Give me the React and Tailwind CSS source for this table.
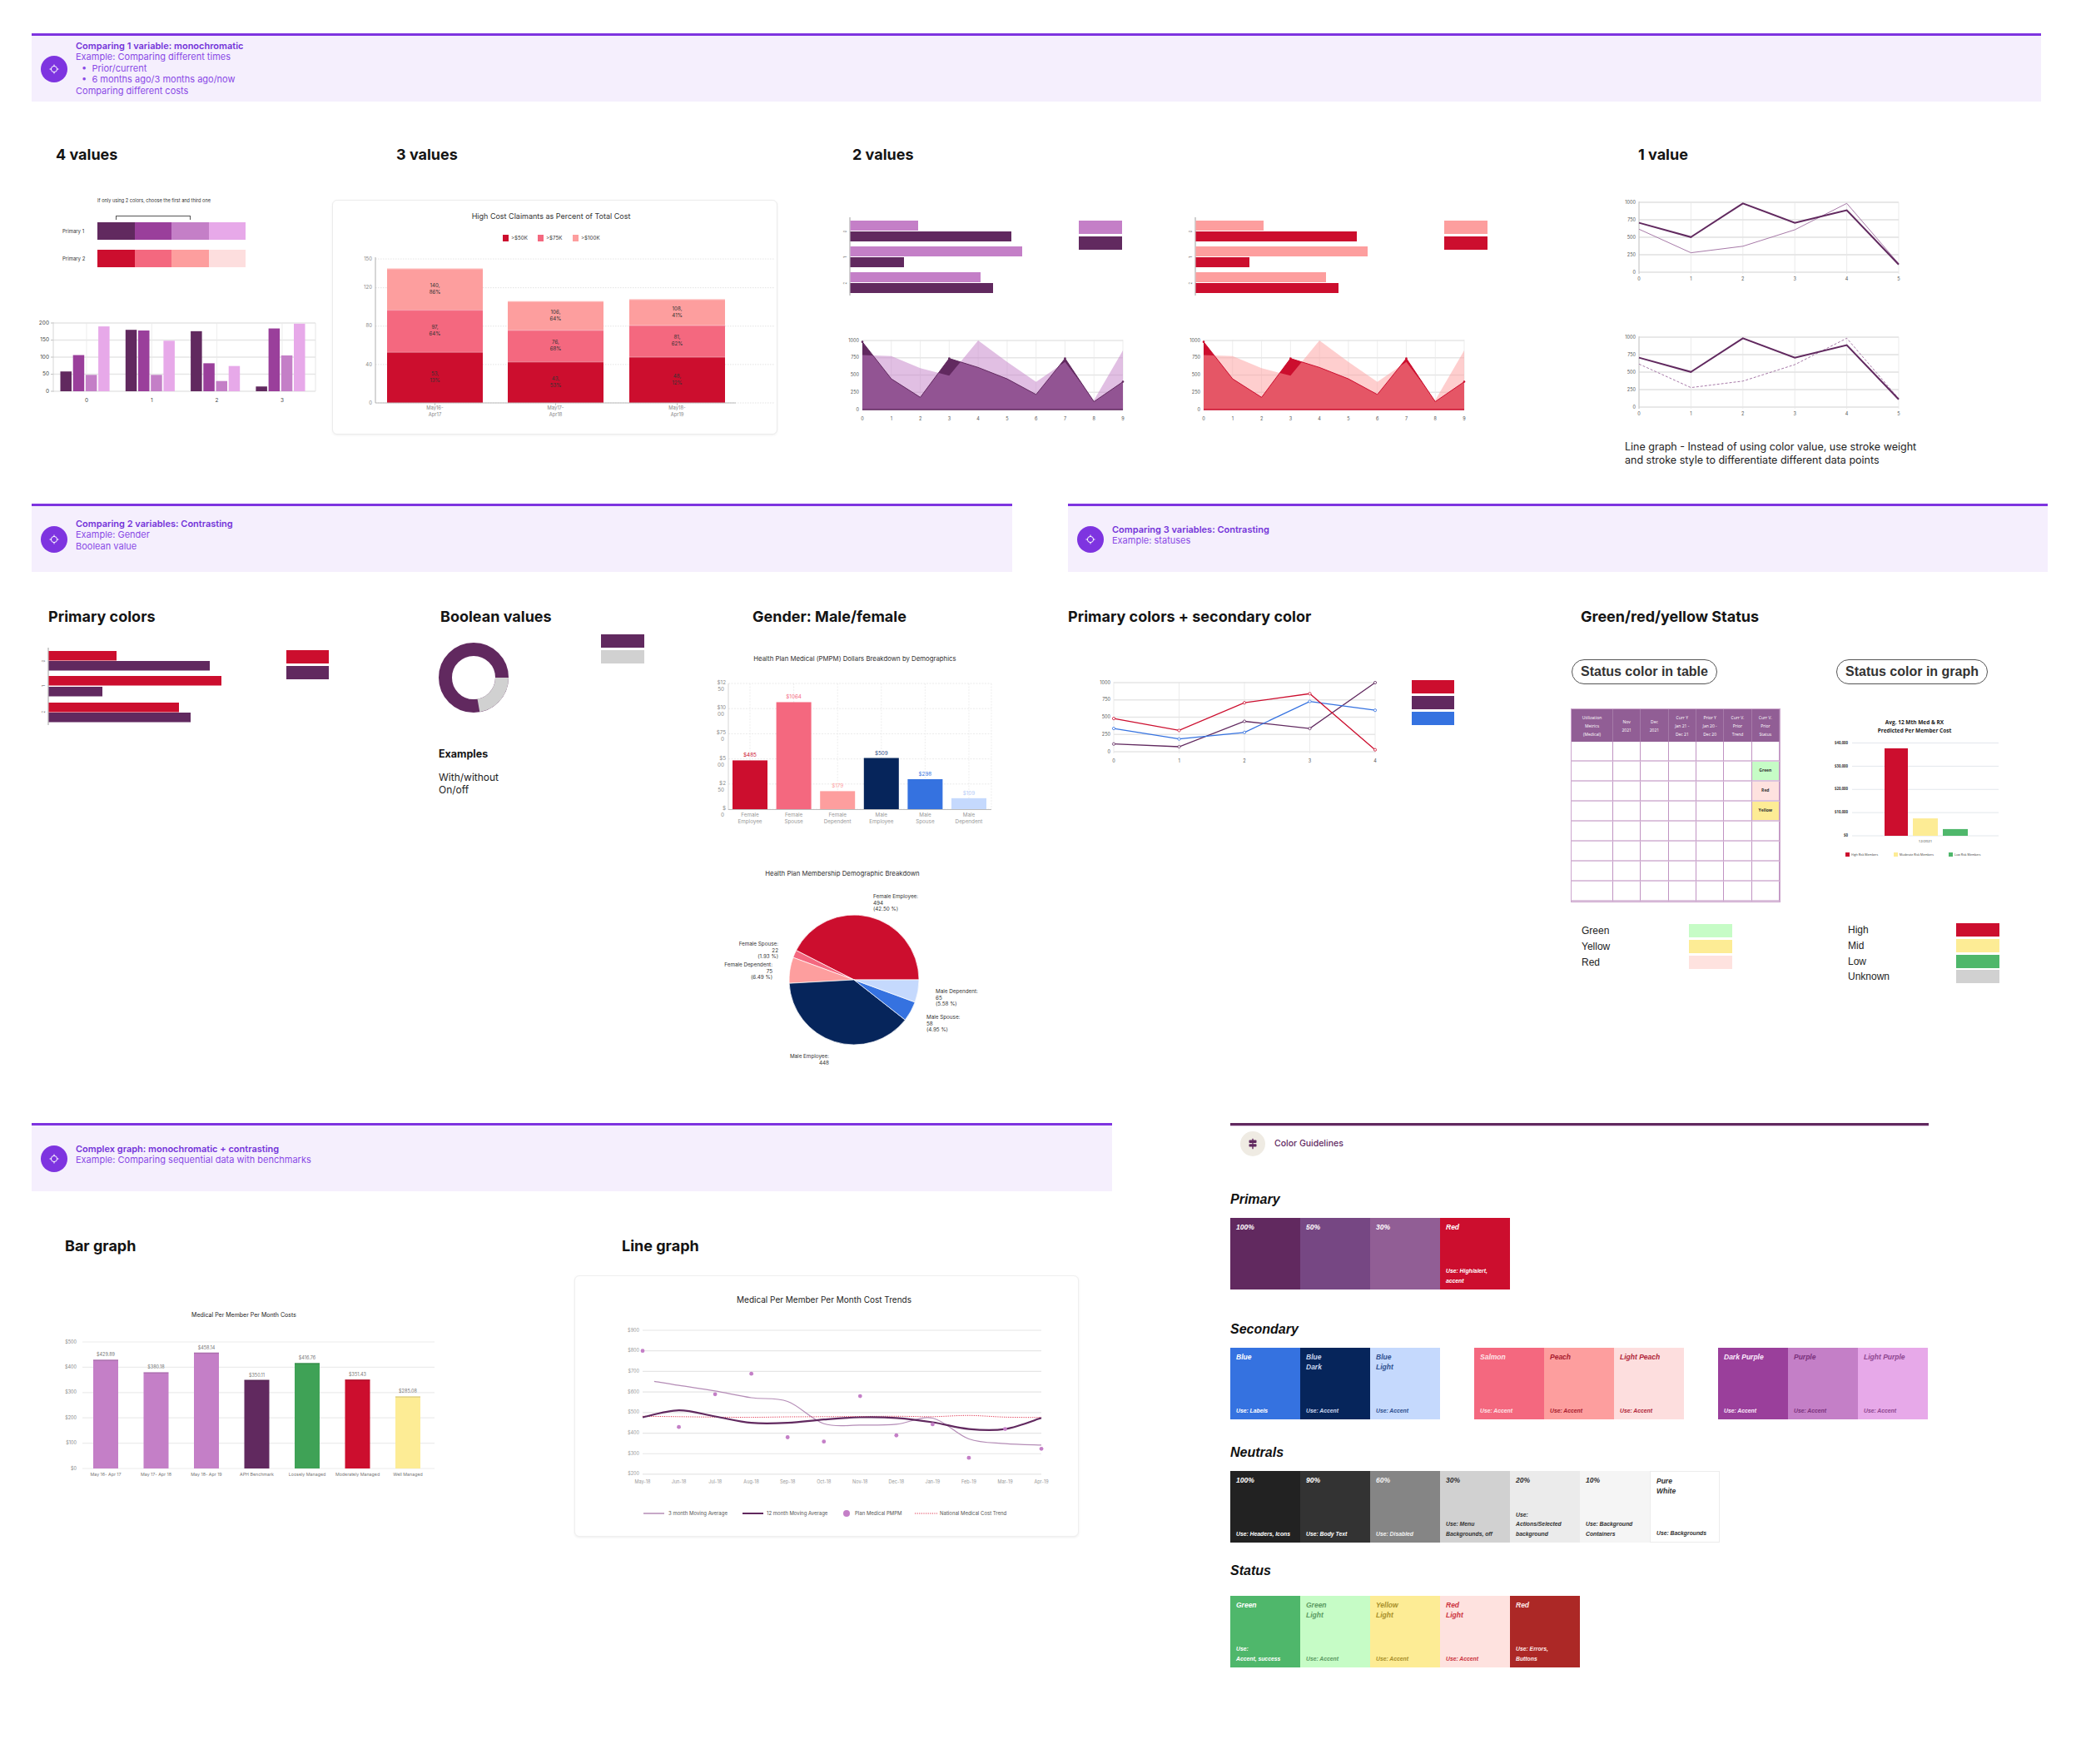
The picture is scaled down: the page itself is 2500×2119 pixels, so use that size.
import React from 'react';

const C = {
  p100: '#61295f', p50: '#764783', p30: '#915e95', red: '#cc0e2e',
  blue: '#3572e0', blueDark: '#06255b', blueLight: '#c5d9fd',
  salmon: '#f4687f', peach: '#fd9e9e', lightPeach: '#fddede',
  dPurple: '#9a3f9b', purple: '#c47fc7', lPurple: '#e7a9e9',
};
const F = "Inter, 'Liberation Sans', sans-serif";
const H = 'text-[18px] leading-[22px] font-bold text-[#141414]';

const pts = (arr) => arr.map((p, i) => `${i ? 'L' : 'M'}${p[0].toFixed(1)} ${p[1].toFixed(1)}`).join(' ');

// catmull-rom -> bezier, for the smooth trend lines
function smooth(p) {
  let d = `M${p[0][0].toFixed(1)} ${p[0][1].toFixed(1)}`;
  for (let i = 0; i < p.length - 1; i++) {
    const p0 = p[i - 1] || p[i], p1 = p[i], p2 = p[i + 1], p3 = p[i + 2] || p2;
    const c1x = p1[0] + (p2[0] - p0[0]) / 6, c1y = p1[1] + (p2[1] - p0[1]) / 6;
    const c2x = p2[0] - (p3[0] - p1[0]) / 6, c2y = p2[1] - (p3[1] - p1[1]) / 6;
    d += ` C${c1x.toFixed(1)} ${c1y.toFixed(1)} ${c2x.toFixed(1)} ${c2y.toFixed(1)} ${p2[0].toFixed(1)} ${p2[1].toFixed(1)}`;
  }
  return d;
}

function Banner({ className, title, children, lift }) {
  return (
    <div className={`${className} h-[82px] border-t-[3px] border-[#7e34e0] bg-[#f5effd] flex items-center pl-[11px]`}>
      <div className="w-[32px] h-[32px] rounded-full bg-[#7e34e0] flex items-center justify-center shrink-0">
        <svg width="14" height="14" viewBox="0 0 14 14" fill="none" stroke="white" strokeWidth="1">
          <circle cx="7" cy="7" r="3.6" />
          <path d="M7 1.5v2M7 10.5v2M1.5 7h2M10.5 7h2" />
        </svg>
      </div>
      <div className={`ml-[10px] text-[11px] leading-[13.5px] text-[#8a4ae6] ${lift ? 'mb-[9px]' : ''}`}>
        <div className="font-semibold text-[#7434d9]">{title}</div>
        {children}
      </div>
    </div>
  );
}

function SwatchRow({ label, colors, className }) {
  return (
    <div className={`${className} ml-[75px] flex items-center`}>
      <span className="w-[42px] text-[6px] text-[#333]">{label}</span>
      <div className="flex w-[178px] h-[21px]">
        {colors.map((c) => <div key={c} className="flex-1" style={{ background: c }} />)}
      </div>
    </div>
  );
}

function FourValues() {
  const data = [[58, 106, 48, 190], [180, 178, 48, 148], [176, 82, 30, 74], [14, 184, 105, 198]];
  const cols = [C.p100, C.dPurple, C.purple, C.lPurple];
  const y = (v) => 91 - v * 0.41;
  const cx = (g) => 64 + g * 78.3;
  return (
    <div className="w-[399px] shrink-0">
      <h2 className={`ml-[67px] mt-[53px] ${H}`}>4 values</h2>
      <p className="ml-[117px] mt-[40px] text-[5.6px] leading-[8px] text-[#333]">If only using 2 colors, choose the first and third one</p>
      <div className="ml-[139px] mt-[14px] w-[90px] h-[5px] border-t border-l border-r border-[#555]" />
      <SwatchRow className="mt-[3px]" label="Primary 1" colors={[C.p100, C.dPurple, C.purple, C.lPurple]} />
      <SwatchRow className="mt-[12px]" label="Primary 2" colors={[C.red, C.salmon, C.peach, C.lightPeach]} />
      <svg className="ml-[40px] mt-[58px]" width="345" height="115" fontFamily={F}>
        {[0, 50, 100, 150, 200].map((v) => (
          <g key={v}>
            <line x1="24" x2="339" y1={y(v)} y2={y(v)} stroke="#e6e6e6" strokeWidth="1.5" />
            <line x1="21" x2="24" y1={y(v)} y2={y(v)} stroke="#999" strokeWidth="0.6" />
            <text x="19" y={y(v)} fontSize="6.5" fill="#444" textAnchor="end" dominantBaseline="middle">{v}</text>
          </g>
        ))}
        {[0, 1, 2, 3].map((g) => (
          <line key={g} x1={cx(g)} x2={cx(g)} y1="9" y2="91" stroke="#e8e8e8" strokeWidth="0.8" />
        ))}
        <line x1="339" x2="339" y1="9" y2="91" stroke="#e6e6e6" strokeWidth="1" />
        <line x1="24" x2="24" y1="8" y2="92" stroke="#ccc" strokeWidth="0.8" />
        {data.map((grp, g) => grp.map((v, i) => (
          <rect key={`${g}-${i}`} x={cx(g) - 31.5 + i * 15.2} y={y(v)} width="13.5" height={v * 0.41} fill={cols[i]} />
        )))}
        {[0, 1, 2, 3].map((g) => (
          <text key={g} x={cx(g)} y="104" fontSize="6.5" fill="#444" textAnchor="middle">{g}</text>
        ))}
      </svg>
    </div>
  );
}

function ThreeValues() {
  const y = (v) => 243 - v * 1.153;
  const bars = [
    { x: 65, v: [53, 97, 140], l: ['53,|13%', '97,|64%', '140,|86%'], d: ['May16-', 'Apr17'] },
    { x: 210, v: [43, 76, 106], l: ['43,|53%', '76,|68%', '106,|64%'], d: ['May17-', 'Apr18'] },
    { x: 356, v: [48, 81, 108], l: ['48,|12%', '81,|62%', '108,|41%'], d: ['May18-', 'Apr19'] },
  ];
  const seg = [C.red, C.salmon, C.peach];
  return (
    <div className="w-[601px] shrink-0">
      <h2 className={`ml-[77px] mt-[53px] ${H}`}>3 values</h2>
      <div className="mt-[43px] w-[535px] h-[282px] rounded-[6px] border border-[#ececec] shadow-[0_1px_3px_rgba(0,0,0,0.06)] bg-white">
        <svg width="535" height="282" fontFamily={F}>
          <text x="262" y="22" fontSize="9" fill="#333" textAnchor="middle">High Cost Claimants as Percent of Total Cost</text>
          {[['>$50K', 204, C.red], ['>$75K', 246, C.salmon], ['>$100K', 288, C.peach]].map(([t, x, c]) => (
            <g key={t}>
              <rect x={x} y="41" width="7" height="8" fill={c} />
              <text x={x + 10} y="45" fontSize="6.2" fill="#333" dominantBaseline="middle">{t}</text>
            </g>
          ))}
          {[150, 120, 80, 40].map((v) => (
            <line key={v} x1="51" x2="531" y1={y(v)} y2={y(v)} stroke="#dcdcdc" strokeWidth="0.8" strokeDasharray="1.5 1.5" />
          ))}
          <line x1="51" x2="531" y1="243" y2="243" stroke="#dcdcdc" strokeWidth="0.8" strokeDasharray="1.5 1.5" />
          {[150, 120, 80, 40, 0].map((v) => (
            <text key={v} x="47" y={y(v)} fontSize="6" fill="#888" textAnchor="end" dominantBaseline="middle">{v}</text>
          ))}
          <line x1="51" x2="51" y1="68" y2="243" stroke="#999" strokeWidth="0.8" />
          {bars.map((b) => (
            <g key={b.x}>
              {b.v.map((v, i) => {
                const lo = i ? b.v[i - 1] : 0;
                const mid = (y(v) + y(lo)) / 2;
                const [a, c] = b.l[i].split('|');
                return (
                  <g key={i}>
                    <rect x={b.x} y={y(v)} width="115" height={y(lo) - y(v)} fill={seg[i]} />
                    <line x1={b.x} x2={b.x + 115} y1={y(v) + 0.5} y2={y(v) + 0.5} stroke="#fff" strokeOpacity="0.35" strokeWidth="1" />
                    <text x={b.x + 57.5} y={mid - 4} fontSize="6.2" fill="#333" textAnchor="middle" dominantBaseline="middle">{a}</text>
                    <text x={b.x + 57.5} y={mid + 4} fontSize="6.2" fill="#333" textAnchor="middle" dominantBaseline="middle">{c}</text>
                  </g>
                );
              })}
              <line x1={b.x + 57.5} x2={b.x + 57.5} y1="243" y2="246" stroke="#999" strokeWidth="0.6" />
              <text x={b.x + 57.5} y="251" fontSize="5.8" fill="#888" textAnchor="middle">{b.d[0]}</text>
              <text x={b.x + 57.5} y="259" fontSize="5.8" fill="#888" textAnchor="middle">{b.d[1]}</text>
            </g>
          ))}
          <line x1="51" x2="484" y1="243" y2="243" stroke="#bbb" strokeWidth="1" />
        </svg>
      </div>
    </div>
  );
}

function HBar({ light, dark, legendX }) {
  const bars = [[light, 10, 98], [dark, 23, 210], [light, 41, 223], [dark, 54, 81], [light, 72, 173], [dark, 85, 188]];
  return (
    <svg width="370" height="105" fontFamily={F}>
      <line x1="16" y1="6" x2="16" y2="100" stroke="#888" strokeWidth="0.8" />
      {bars.map(([c, y, x2], i) => (
        <rect key={i} x="16.5" y={y} width={x2 - 16.5} height="12" fill={c} />
      ))}
      {['0', '1', '2'].map((t, i) => (
        <text key={t} x="12" y={[23, 54, 85][i]} fontSize="4.5" fill="#555" textAnchor="middle" transform={`rotate(-90 12 ${[23, 54, 85][i]})`}>{t}</text>
      ))}
      <rect x={legendX} y="10" width="52" height="16" fill={light} />
      <rect x={legendX} y="29" width="52" height="16" fill={dark} />
    </svg>
  );
}

function Area({ dark, light }) {
  const A = [980, 445, 177, 740, 610, 445, 218, 740, 115, 403];
  const B = [790, 775, 600, 490, 1000, 690, 400, 690, 135, 855];
  const x = (i) => 26 + i * 34.78;
  const y = (v) => 92 - v * 0.083;
  const area = (s) => `${pts(s.map((v, i) => [x(i), y(v)]))} L${x(9)} ${y(0)} L${x(0)} ${y(0)} Z`;
  return (
    <svg width="345" height="115" fontFamily={F}>
      {[0, 250, 500, 750, 1000].map((v) => (
        <g key={v}>
          <line x1="26" x2="339" y1={y(v)} y2={y(v)} stroke="#e6e6e6" strokeWidth="1.5" />
          <text x="22" y={y(v)} fontSize="5.5" fill="#555" textAnchor="end" dominantBaseline="middle">{v}</text>
        </g>
      ))}
      {A.map((_, i) => (
        <g key={i}>
          <line x1={x(i)} x2={x(i)} y1="8" y2="93" stroke="#e8e8e8" strokeWidth="0.8" />
          <text x={x(i)} y="105" fontSize="5.5" fill="#555" textAnchor="middle">{i}</text>
        </g>
      ))}
      <path d={area(A)} fill={dark} />
      <path d={area(B)} fill={light} fillOpacity="0.5" />
      <path d={pts(A.map((v, i) => [x(i), y(v)]))} fill="none" stroke={dark} strokeWidth="1" />
      <line x1="26" x2="339" y1={y(0)} y2={y(0)} stroke={dark} strokeWidth="1.5" />
      <circle cx={x(0)} cy={y(980)} r="1.3" fill={dark} />
      <circle cx={x(3)} cy={y(740)} r="1.3" fill={dark} />
      <circle cx={x(7)} cy={y(740)} r="1.3" fill={dark} />
      <circle cx={x(9)} cy={y(403)} r="1.3" fill={dark} />
    </svg>
  );
}

function TwoValues() {
  return (
    <div className="w-[940px] shrink-0">
      <h2 className={`ml-[24px] mt-[53px] ${H}`}>2 values</h2>
      <div className="flex mt-[58px]">
        <div className="ml-[5px]"><HBar light={C.purple} dark={C.p100} legendX={291} /></div>
        <div className="ml-[45px]"><HBar light={C.peach} dark={C.red} legendX={315} /></div>
      </div>
      <div className="flex mt-[40px]">
        <div className="ml-[10px]"><Area dark={C.p100} light={C.purple} /></div>
        <div className="ml-[65px]"><Area dark={C.red} light={C.peach} /></div>
      </div>
    </div>
  );
}

function OneValueChart({ dashed }) {
  const dark = [707, 502, 984, 707, 887, 109];
  const light = [615, 279, 372, 607, 984, 121];
  const x = (i) => 29 + i * 62.4;
  const y = (v) => 93 - v * 0.084;
  return (
    <svg width="360" height="110" fontFamily={F}>
      {[0, 250, 500, 750, 1000].map((v) => (
        <g key={v}>
          <line x1="29" x2="341" y1={y(v)} y2={y(v)} stroke="#e8e8e8" strokeWidth="2" />
          <text x="25" y={y(v)} fontSize="5.5" fill="#555" textAnchor="end" dominantBaseline="middle">{v}</text>
        </g>
      ))}
      {dark.map((_, i) => (
        <g key={i}>
          <line x1={x(i)} x2={x(i)} y1="9" y2="95" stroke="#e6e6e6" strokeWidth="0.8" />
          <text x={x(i)} y="103" fontSize="5.5" fill="#555" textAnchor="middle">{i}</text>
        </g>
      ))}
      <line x1="29" x2="29" y1="8" y2="95" stroke="#bbb" strokeWidth="0.8" />
      <path d={pts(light.map((v, i) => [x(i), y(v)]))} fill="none" stroke="#a77aa8" strokeWidth="1" strokeDasharray={dashed ? '3 2' : undefined} />
      <path d={pts(dark.map((v, i) => [x(i), y(v)]))} fill="none" stroke={C.p100} strokeWidth="2" />
    </svg>
  );
}

function OneValue() {
  return (
    <div className="w-[560px] shrink-0">
      <h2 className={`ml-[28px] mt-[53px] ${H}`}>1 value</h2>
      <div className="mt-[37px]"><OneValueChart /></div>
      <div className="mt-[52px]"><OneValueChart dashed /></div>
      <p className="ml-[12px] mt-[23px] text-[12.5px] leading-[16px] text-[#222]">
        Line graph - Instead of using color value, use stroke weight<br />and stroke style to differentiate different data points
      </p>
    </div>
  );
}

function PrimaryColors() {
  const bars = [[C.red, 10, 95], [C.p100, 22, 207], [C.red, 40, 221], [C.p100, 53, 78], [C.red, 72, 170], [C.p100, 84, 184]];
  return (
    <div className="w-[470px] shrink-0">
      <h2 className={`ml-[20px] mt-[43px] ${H}`}>Primary colors</h2>
      <svg className="ml-[7px] mt-[20px]" width="360" height="105" fontFamily={F}>
        <line x1="13" x2="13" y1="6" y2="99" stroke="#888" strokeWidth="0.8" />
        {bars.map(([c, y, x2], i) => (
          <rect key={i} x="13.5" y={y} width={x2 - 13.5} height="11.5" fill={c} />
        ))}
        {['0', '1', '2'].map((t, i) => (
          <text key={t} x="9" y={[22, 52, 83][i]} fontSize="4.5" fill="#555" textAnchor="middle" transform={`rotate(-90 9 ${[22, 52, 83][i]})`}>{t}</text>
        ))}
        <rect x="299" y="9" width="51" height="16" fill={C.red} />
        <rect x="299" y="28" width="51" height="16" fill={C.p100} />
      </svg>
    </div>
  );
}

function BooleanValues() {
  const cx = 49, cy = 54, r = 34;
  const a1 = 0, a2 = 80; // grey slice, degrees clockwise from 3 o'clock
  const p = (a) => [cx + r * Math.cos((a * Math.PI) / 180), cy + r * Math.sin((a * Math.PI) / 180)];
  const [sx, sy] = p(a1), [ex, ey] = p(a2);
  return (
    <div className="w-[342px] shrink-0">
      <h2 className={`ml-[21px] mt-[43px] ${H}`}>Boolean values</h2>
      <svg className="ml-[12px] mt-[8px]" width="260" height="110">
        <circle cx={cx} cy={cy} r={r} fill="none" stroke={C.p100} strokeWidth="16" />
        <path d={`M${sx} ${sy} A${r} ${r} 0 0 1 ${ex} ${ey}`} fill="none" stroke="#d1d1d1" strokeWidth="16" />
        <rect x="202" y="2" width="52" height="16" fill={C.p100} />
        <rect x="202" y="21" width="52" height="16" fill="#d1d1d1" />
      </svg>
      <p className="ml-[19px] mt-[28px] text-[12.5px] leading-[15px] font-bold text-[#141414]">Examples</p>
      <p className="ml-[19px] mt-[13px] text-[12px] leading-[15px] text-[#222]">With/without<br />On/off</p>
    </div>
  );
}

function GenderBars() {
  const y = (v) => 190 - v * 0.1208;
  const bars = [
    [485, C.red, C.red, 'Female', 'Employee'],
    [1064, C.salmon, '#f4687f', 'Female', 'Spouse'],
    [179, C.peach, '#fd9e9e', 'Female', 'Dependent'],
    [509, C.blueDark, '#2c4a86', 'Male', 'Employee'],
    [298, C.blue, C.blue, 'Male', 'Spouse'],
    [109, C.blueLight, '#b3cbf7', 'Male', 'Dependent'],
  ];
  const ticks = [[1250, '$12', '50'], [1000, '$10', '00'], [750, '$75', '0'], [500, '$5', '00'], [250, '$2', '50'], [0, '$', '0']];
  const bx = (i) => 30 + i * 52.6;
  return (
    <svg className="mt-[30px]" width="360" height="215" fontFamily={F}>
      <text x="177" y="10" fontSize="7.8" fill="#333" textAnchor="middle" dominantBaseline="middle">Health Plan Medical (PMPM) Dollars Breakdown by Demographics</text>
      {ticks.map(([v, a, b]) => (
        <g key={v}>
          <line x1="25" x2="341" y1={y(v)} y2={y(v)} stroke="#e2e2e2" strokeWidth="0.7" strokeDasharray="2 1.5" />
          <text x="22" y={y(v) + 1} fontSize="6.3" fill="#888" textAnchor="end">{a}</text>
          <text x="20" y={y(v) + 9} fontSize="6.3" fill="#888" textAnchor="end">{b}</text>
        </g>
      ))}
      {bars.map((b, i) => (
        <line key={i} x1={bx(i) + 21} x2={bx(i) + 21} y1="39" y2="190" stroke="#e6e6e6" strokeWidth="0.7" strokeDasharray="2 1.5" />
      ))}
      <line x1="341" x2="341" y1="39" y2="190" stroke="#e6e6e6" strokeWidth="0.7" strokeDasharray="2 1.5" />
      <line x1="25" x2="25" y1="39" y2="191" stroke="#ccc" strokeWidth="0.8" />
      {bars.map(([v, c, lc, l1, l2], i) => (
        <g key={i}>
          <rect x={bx(i)} y={y(v)} width="42" height={v * 0.1208} fill={c} />
          <text x={bx(i) + 21} y={y(v) - 4} fontSize="6.3" fill={lc} textAnchor="middle">{'$' + v}</text>
          <text x={bx(i) + 21} y="199" fontSize="6.3" fill="#999" textAnchor="middle">{l1}</text>
          <text x={bx(i) + 21} y="207" fontSize="6.3" fill="#999" textAnchor="middle">{l2}</text>
        </g>
      ))}
      <line x1="25" x2="341" y1="190.5" y2="190.5" stroke="#bbb" strokeWidth="1" />
    </svg>
  );
}

function GenderPie() {
  const cx = 176, cy = 137, r = 78;
  const vals = [[494, C.red], [22, C.salmon], [75, C.peach], [448, C.blueDark], [58, C.blue], [65, C.blueLight]];
  const total = vals.reduce((s, v) => s + v[0], 0);
  let acc = 0;
  const p = (t) => [cx + r * Math.cos(t), cy - r * Math.sin(t)];
  const labels = [
    [199, 39, 'start', ['Female Employee:', '494', '(42.50 %)']],
    [85, 96, 'end', ['Female Spouse:', '22', '(1.93 %)']],
    [78, 121, 'end', ['Female Dependent:', '75', '(6.49 %)']],
    [274, 153, 'start', ['Male Dependent:', '65', '(5.58 %)']],
    [263, 184, 'start', ['Male Spouse:', '58', '(4.95 %)']],
    [146, 231, 'end', ['Male Employee:', '448']],
  ];
  return (
    <svg className="mt-[43px]" width="350" height="245" fontFamily={F}>
      <text x="162" y="10" fontSize="7.8" fill="#333" textAnchor="middle" dominantBaseline="middle">Health Plan Membership Demographic Breakdown</text>
      {vals.map(([v, c], i) => {
        const t1 = (acc / total) * 2 * Math.PI;
        acc += v;
        const t2 = (acc / total) * 2 * Math.PI;
        const [x1, y1] = p(t1), [x2, y2] = p(t2);
        const large = t2 - t1 > Math.PI ? 1 : 0;
        return <path key={i} d={`M${cx} ${cy} L${x1} ${y1} A${r} ${r} 0 ${large} 0 ${x2} ${y2} Z`} fill={c} stroke="#fff" strokeWidth="0.7" />;
      })}
      {labels.map(([x, y, anchor, lines], i) => (
        <text key={i} x={x} y={y} fontSize="6.3" fill="#333" textAnchor={anchor}>
          {lines.map((l, j) => <tspan key={j} x={x} dy={j ? 7.5 : 0}>{l}</tspan>)}
        </text>
      ))}
    </svg>
  );
}

function Gender() {
  return (
    <div className="w-[366px] shrink-0">
      <h2 className={`ml-[54px] mt-[43px] ${H}`}>Gender: Male/female</h2>
      <GenderBars />
      <GenderPie />
    </div>
  );
}

function PrimarySecondary() {
  const x = (i) => 38 + i * 78.5;
  const y = (v) => 95 - v * 0.083;
  const series = [
    [C.p100, [112, 72, 440, 336, 1000]],
    [C.blue, [336, 184, 280, 728, 600]],
    [C.red, [480, 308, 708, 840, 28]],
  ];
  return (
    <div className="w-[597px] shrink-0">
      <h2 className={`mt-[43px] ${H}`}>Primary colors + secondary color</h2>
      <svg className="ml-[17px] mt-[56px]" width="460" height="115" fontFamily={F}>
        {[0, 250, 500, 750, 1000].map((v) => (
          <g key={v}>
            <line x1="38" x2="352" y1={y(v)} y2={y(v)} stroke="#e6e6e6" strokeWidth="1.5" />
            <text x="34" y={y(v)} fontSize="5.5" fill="#555" textAnchor="end" dominantBaseline="middle">{v}</text>
          </g>
        ))}
        {[0, 1, 2, 3, 4].map((i) => (
          <g key={i}>
            <line x1={x(i)} x2={x(i)} y1="11" y2="97" stroke="#e6e6e6" strokeWidth="0.8" />
            <text x={x(i)} y="108" fontSize="5.5" fill="#555" textAnchor="middle">{i}</text>
          </g>
        ))}
        {series.map(([c, s]) => (
          <g key={c}>
            <path d={pts(s.map((v, i) => [x(i), y(v)]))} fill="none" stroke={c} strokeWidth="1.3" />
            {s.map((v, i) => <circle key={i} cx={x(i)} cy={y(v)} r="1.6" fill="#fff" stroke={c} strokeWidth="0.8" />)}
          </g>
        ))}
        <rect x="396" y="9" width="51" height="16" fill={C.red} />
        <rect x="396" y="28" width="51" height="16" fill={C.p100} />
        <rect x="396" y="47" width="51" height="16" fill={C.blue} />
      </svg>
    </div>
  );
}

function Pill({ children }) {
  return (
    <div className="inline-flex h-[30px] px-[10px] items-center rounded-full border border-[#555] text-[16px] font-bold text-[#333] font-['Liberation_Sans',sans-serif]">
      {children}
    </div>
  );
}

function StatusTable() {
  const heads = ['Utilization|Metrics|(Medical)', 'Nov|2021', 'Dec|2021', 'Curr Y|Jan 21 -|Dec 21', 'Prior Y|Jan 20 -|Dec 20', 'Curr V.|Prior|Trend', 'Curr V.|Prior|Status'];
  const status = { 1: ['Green', 'bg-[#c6fcc6]'], 2: ['Red', 'bg-[#fee2df]'], 3: ['Yellow', 'bg-[#fdec95]'] };
  return (
    <div className="mt-[29px] w-[252px] grid grid-cols-[50px_repeat(6,1fr)] border border-[#cda7ce] font-['Open_Sans',sans-serif]">
      {heads.map((h) => (
        <div key={h} className="h-[39px] bg-[#915e95] text-white text-[5px] leading-[10px] flex flex-col items-center justify-center text-center border-r border-[#a57aa8]">
          {h.split('|').map((l) => <span key={l}>{l}</span>)}
        </div>
      ))}
      {Array.from({ length: 8 }).map((_, r) => heads.map((h, c) => {
        const s = c === 6 ? status[r] : null;
        return (
          <div key={`${r}-${c}`} className={`h-[24px] border-r border-b-2 border-r-[#c093c2] border-b-[#dcc3dd] flex items-center justify-center text-[5px] font-bold text-[#333] ${s ? s[1] : ''}`}>
            {s ? s[0] : ''}
          </div>
        );
      }))}
    </div>
  );
}

function StatusGraph() {
  const y = (v) => 144 - v * (111.5 / 40000);
  return (
    <svg className="-ml-[10px] mt-[38px]" width="215" height="175" fontFamily="'Open Sans', 'Liberation Sans', sans-serif">
      <text x="104" y="10" fontSize="6.5" fontWeight="700" textAnchor="middle" fill="#222">{'Avg. 12 Mth Med & RX'}</text>
      <text x="104" y="20" fontSize="6.5" fontWeight="700" textAnchor="middle" fill="#222">Predicted Per Member Cost</text>
      {[0, 10000, 20000, 30000, 40000].map((v) => (
        <g key={v}>
          <line x1="29" x2="205" y1={y(v)} y2={y(v)} stroke="#e3e7ec" strokeWidth="1" />
          <text x="24" y={y(v)} fontSize="4.3" fontWeight="700" fill="#333" textAnchor="end" dominantBaseline="middle">{'$' + v.toLocaleString('en-US')}</text>
        </g>
      ))}
      <rect x="68" y={y(37700)} width="28" height={144 - y(37700)} fill={C.red} />
      <rect x="102" y={y(7500)} width="30" height={144 - y(7500)} fill="#fdec95" />
      <rect x="138" y={y(2900)} width="30" height={144 - y(2900)} fill="#4fb76b" />
      <text x="117" y="152" fontSize="4.3" fill="#333" textAnchor="middle">12/2021</text>
      {[[21, C.red, 'High Risk Members'], [79, '#fdec95', 'Moderate Risk Members'], [145, '#4fb76b', 'Low Risk Members']].map(([x, c, t]) => (
        <g key={t}>
          <rect x={x} y="164" width="5" height="5" fill={c} />
          <text x={x + 7} y="167" fontSize="3.6" fill="#333" dominantBaseline="middle">{t}</text>
        </g>
      ))}
    </svg>
  );
}

function LegendRows({ rows, labelW }) {
  return (
    <div className="font-['Liberation_Sans',sans-serif]">
      {rows.map(([t, c]) => (
        <div key={t} className="h-[18.7px] flex items-center">
          <span className={`${labelW} text-[12px] text-[#222]`}>{t}</span>
          <span className="w-[52px] h-[16px]" style={{ background: c }} />
        </div>
      ))}
    </div>
  );
}

function StatusSection() {
  return (
    <div className="w-[580px] shrink-0">
      <h2 className={`ml-[19px] mt-[43px] ${H}`}>Green/red/yellow Status</h2>
      <div className="flex">
        <div className="ml-[7px] w-[252px] shrink-0">
          <div className="mt-[40px] ml-[1px]"><Pill>Status color in table</Pill></div>
          <StatusTable />
          <div className="mt-[25px] ml-[13px]">
            <LegendRows labelW="w-[129px]" rows={[['Green', '#c6fcc6'], ['Yellow', '#fdec95'], ['Red', '#fee2df']]} />
          </div>
        </div>
        <div className="ml-[67px] w-[200px] shrink-0">
          <div className="mt-[40px]"><Pill>Status color in graph</Pill></div>
          <StatusGraph />
          <div className="mt-[73px] ml-[14px]">
            <LegendRows labelW="w-[130px]" rows={[['High', C.red], ['Mid', '#fdec95'], ['Low', '#4fb76b'], ['Unknown', '#d1d1d1']]} />
          </div>
        </div>
      </div>
    </div>
  );
}

function BarGraph() {
  const y = (v) => 196 - v * 0.304;
  const bars = [
    [429.89, C.purple, 'May 16- Apr 17'], [380.18, C.purple, 'May 17- Apr 18'], [458.14, C.purple, 'May 18- Apr 19'],
    [350.11, C.p100, 'APH Benchmark'], [416.76, '#3fa256', 'Loosely Managed'], [351.43, C.red, 'Moderately Managed'],
    [285.08, '#fdec95', 'Well Managed'],
  ];
  return (
    <svg className="ml-[12px] mt-[60px]" width="480" height="215" fontFamily={F}>
      <text x="243" y="12" fontSize="7" fill="#222" textAnchor="middle" dominantBaseline="middle">Medical Per Member Per Month Costs</text>
      {[0, 100, 200, 300, 400, 500].map((v) => (
        <g key={v}>
          <line x1="49" x2="472" y1={y(v)} y2={y(v)} stroke="#ececec" strokeWidth="1.2" />
          <text x="42" y={y(v)} fontSize="5.5" fill="#888" textAnchor="end" dominantBaseline="middle">{'$' + v}</text>
        </g>
      ))}
      {bars.map(([v, c, l], i) => {
        const x = 62 + i * 60.5;
        return (
          <g key={l}>
            <rect x={x} y={y(v)} width="30" height={196 - y(v)} fill={c} />
            <rect x={x} y={y(v)} width="30" height="1.5" fill="#000" fillOpacity="0.12" />
            <text x={x + 15} y={y(v) - 4} fontSize="5.5" fill="#777" textAnchor="middle">{'$' + v.toFixed(2).replace(/0$/, '').replace(/\.$/, '')}</text>
            <text x={x + 15} y="205" fontSize="5.3" fill="#777" textAnchor="middle">{l}</text>
          </g>
        );
      })}
    </svg>
  );
}

function LineGraph() {
  const x = (i) => 81 + i * 43.55;
  const y = (v) => 65 + (900 - v) * 0.2471;
  const months = ['May-18', 'Jun-18', 'Jul-18', 'Aug-18', 'Sep-18', 'Oct-18', 'Nov-18', 'Dec-18', 'Jan-19', 'Feb-19', 'Mar-19', 'Apr-19'];
  const ma3 = [[0.32, 652], [1, 632], [2, 605], [3, 572], [4, 554], [5, 446], [6, 439], [7, 443], [8, 473], [9, 372], [10, 349], [11, 342]];
  const ma12 = [477, 511, 481, 450, 450, 466, 477, 474, 453, 420, 420, 474];
  const dots = [800, 430, 589, 689, 380, 359, 580, 389, 443, 280, 420, 324];
  const nat = [482, 480, 478, 477, 479, 480, 481, 482, 480, 486, 478, 476];
  return (
    <div className="mt-[24px] w-[606px] h-[314px] rounded-[6px] border border-[#efefef] shadow-[0_1px_3px_rgba(0,0,0,0.07)] bg-white">
      <svg width="606" height="314" fontFamily={F}>
        <text x="299" y="29" fontSize="10" fill="#222" textAnchor="middle" dominantBaseline="middle">Medical Per Member Per Month Cost Trends</text>
        {[200, 300, 400, 500, 600, 700, 800, 900].map((v) => (
          <g key={v}>
            <line x1="81" x2="560" y1={y(v)} y2={y(v)} stroke="#e6e6e6" strokeWidth="1.2" />
            <text x="77" y={y(v)} fontSize="5.5" fill="#999" textAnchor="end" dominantBaseline="middle">{'$' + v}</text>
          </g>
        ))}
        {months.map((m, i) => (
          <text key={m} x={x(i)} y="247" fontSize="5.5" fill="#999" textAnchor="middle" dominantBaseline="middle">{m}</text>
        ))}
        <path d={smooth(ma3.map(([i, v]) => [x(i), y(v)]))} fill="none" stroke="#b48cb6" strokeWidth="1.2" />
        <path d={smooth(nat.map((v, i) => [x(i), y(v)]))} fill="none" stroke="#e0344e" strokeWidth="1" strokeDasharray="1.2 1.4" />
        <path d={smooth(ma12.map((v, i) => [x(i), y(v)]))} fill="none" stroke={C.p100} strokeWidth="2.2" />
        {dots.map((v, i) => <circle key={i} cx={x(i)} cy={y(v)} r="2.4" fill={C.purple} />)}
        <line x1="82" x2="107" y1="285" y2="285" stroke="#b48cb6" strokeWidth="1.5" />
        <text x="112" y="285" fontSize="6" fill="#555" dominantBaseline="middle">3 month Moving Average</text>
        <line x1="201" x2="226" y1="285" y2="285" stroke={C.p100} strokeWidth="2" />
        <text x="230" y="285" fontSize="6" fill="#555" dominantBaseline="middle">12 month Moving Average</text>
        <circle cx="326" cy="285" r="4" fill={C.purple} />
        <text x="336" y="285" fontSize="6" fill="#555" dominantBaseline="middle">Plan Medical PMPM</text>
        <line x1="408" x2="435" y1="285" y2="285" stroke="#e0344e" strokeWidth="1" strokeDasharray="1.2 1.4" />
        <text x="438" y="285" fontSize="6" fill="#555" dominantBaseline="middle">National Medical Cost Trend</text>
      </svg>
    </div>
  );
}

function Swatch({ bg, label, use, text, extra = '' }) {
  return (
    <div className={`w-[84px] h-[86px] shrink-0 flex flex-col justify-between px-[7px] pt-[6px] pb-[5px] font-['Liberation_Sans',sans-serif] italic font-bold ${extra}`} style={{ background: bg, color: text }}>
      <div className="text-[8.5px] leading-[11.5px]">{label.split('|').map((l) => <div key={l}>{l}</div>)}</div>
      <div className="text-[6.8px] leading-[11.5px]">{use.split('|').map((l) => <div key={l}>{l}</div>)}</div>
    </div>
  );
}

function GuideLabel({ children, className }) {
  return <h3 className={`${className} text-[16px] leading-[20px] font-bold italic text-[#111] font-['Liberation_Sans',sans-serif]`}>{children}</h3>;
}

function ColorGuidelines() {
  return (
    <div className="ml-[138px] w-[839px] shrink-0">
      <div className="h-[3px] bg-[#61295f]" />
      <div className="h-px bg-[#dcc2dc]" />
      <div className="mt-[6px] ml-[12px] flex items-center">
        <div className="w-[30px] h-[30px] rounded-full bg-[#efebe3] flex items-center justify-center">
          <svg width="14" height="14" viewBox="0 0 14 14" fill={C.p100}>
            <rect x="6.3" y="0.8" width="1.4" height="12.4" />
            <rect x="2.5" y="2.6" width="9" height="3.4" rx="0.8" />
            <rect x="2.5" y="7.2" width="9" height="3.4" rx="0.8" />
          </svg>
        </div>
        <span className="ml-[11px] text-[10.5px] font-medium text-[#61295f]">Color Guidelines</span>
      </div>
      <GuideLabel className="mt-[42px]">Primary</GuideLabel>
      <div className="mt-[12px] flex">
        <Swatch bg={C.p100} label="100%" use="" text="#fff" />
        <Swatch bg={C.p50} label="50%" use="" text="#fff" />
        <Swatch bg={C.p30} label="30%" use="" text="#fff" />
        <Swatch bg={C.red} label="Red" use="Use: High/alert,|accent" text="#fff" />
      </div>
      <GuideLabel className="mt-[38px]">Secondary</GuideLabel>
      <div className="mt-[12px] flex gap-[41px]">
        <div className="flex">
          <Swatch bg={C.blue} label="Blue" use="Use: Labels" text="#fff" />
          <Swatch bg={C.blueDark} label="Blue|Dark" use="Use: Accent" text="#c9d6ee" />
          <Swatch bg={C.blueLight} label="Blue|Light" use="Use: Accent" text="#2f4f8f" />
        </div>
        <div className="flex">
          <Swatch bg={C.salmon} label="Salmon" use="Use: Accent" text="#fde4e8" />
          <Swatch bg={C.peach} label="Peach" use="Use: Accent" text="#a81c2e" />
          <Swatch bg={C.lightPeach} label="Light Peach" use="Use: Accent" text="#b0263a" />
        </div>
        <div className="flex">
          <Swatch bg={C.dPurple} label="Dark Purple" use="Use: Accent" text="#fbe9fb" />
          <Swatch bg={C.purple} label="Purple" use="Use: Accent" text="#7a327c" />
          <Swatch bg={C.lPurple} label="Light Purple" use="Use: Accent" text="#8e4790" />
        </div>
      </div>
      <GuideLabel className="mt-[30px]">Neutrals</GuideLabel>
      <div className="mt-[12px] flex">
        <Swatch bg="#222222" label="100%" use="Use: Headers, Icons" text="#fff" />
        <Swatch bg="#333333" label="90%" use="Use: Body Text" text="#fff" />
        <Swatch bg="#858585" label="60%" use="Use: Disabled" text="#f2f2f2" />
        <Swatch bg="#d1d1d1" label="30%" use="Use: Menu|Backgrounds, off" text="#333" />
        <Swatch bg="#ebebeb" label="20%" use="Use: Actions/Selected|background" text="#333" />
        <Swatch bg="#f5f5f5" label="10%" use="Use: Background|Containers" text="#333" />
        <Swatch bg="#ffffff" label="Pure|White" use="Use: Backgrounds" text="#333" extra="border border-[#ececec]" />
      </div>
      <GuideLabel className="mt-[24px]">Status</GuideLabel>
      <div className="mt-[20px] flex">
        <Swatch bg="#4fb76b" label="Green" use="Use:|Accent, success" text="#fff" />
        <Swatch bg="#c6fcc6" label="Green|Light" use="Use: Accent" text="#5b9a62" />
        <Swatch bg="#fdec95" label="Yellow|Light" use="Use: Accent" text="#a88f2a" />
        <Swatch bg="#fee2df" label="Red|Light" use="Use: Accent" text="#cc3340" />
        <Swatch bg="#ac2826" label="Red" use="Use: Errors,|Buttons" text="#fde8e8" />
      </div>
    </div>
  );
}

export default function App() {
  return (
    <div className="w-[2500px] h-[2119px] bg-white overflow-hidden font-['Inter','Liberation_Sans',sans-serif] text-[#1a1a1a]">
      <div className="pt-[40px] pl-[38px]">
        <Banner className="w-[2414px]" title="Comparing 1 variable: monochromatic">
          <div>Example: Comparing different times</div>
          <div className="pl-[7px]">•&nbsp;&nbsp;Prior/current</div>
          <div className="pl-[7px]">•&nbsp;&nbsp;6 months ago/3 months ago/now</div>
          <div>Comparing different costs</div>
        </Banner>
      </div>
      <div className="flex h-[483px]">
        <FourValues />
        <ThreeValues />
        <TwoValues />
        <OneValue />
      </div>
      <div className="flex h-[744px]">
        <div className="ml-[38px] w-[1178px] shrink-0">
          <Banner className="w-[1178px]" title="Comparing 2 variables: Contrasting" lift>
            <div>Example: Gender</div>
            <div>Boolean value</div>
          </Banner>
          <div className="flex">
            <PrimaryColors />
            <BooleanValues />
            <Gender />
          </div>
        </div>
        <div className="ml-[67px] w-[1177px] shrink-0">
          <Banner className="w-[1177px]" title="Comparing 3 variables: Contrasting" lift>
            <div>Example: statuses</div>
          </Banner>
          <div className="flex">
            <PrimarySecondary />
            <StatusSection />
          </div>
        </div>
      </div>
      <div className="flex">
        <div className="ml-[38px] w-[1302px] shrink-0">
          <Banner className="w-[1298px]" title="Complex graph: monochromatic + contrasting" lift>
            <div>Example: Comparing sequential data with benchmarks</div>
          </Banner>
          <div className="flex">
            <div className="w-[652px] shrink-0">
              <h2 className={`ml-[40px] mt-[55px] ${H}`}>Bar graph</h2>
              <BarGraph />
            </div>
            <div className="w-[650px] shrink-0">
              <h2 className={`ml-[57px] mt-[55px] ${H}`}>Line graph</h2>
              <LineGraph />
            </div>
          </div>
        </div>
        <ColorGuidelines />
      </div>
    </div>
  );
}
